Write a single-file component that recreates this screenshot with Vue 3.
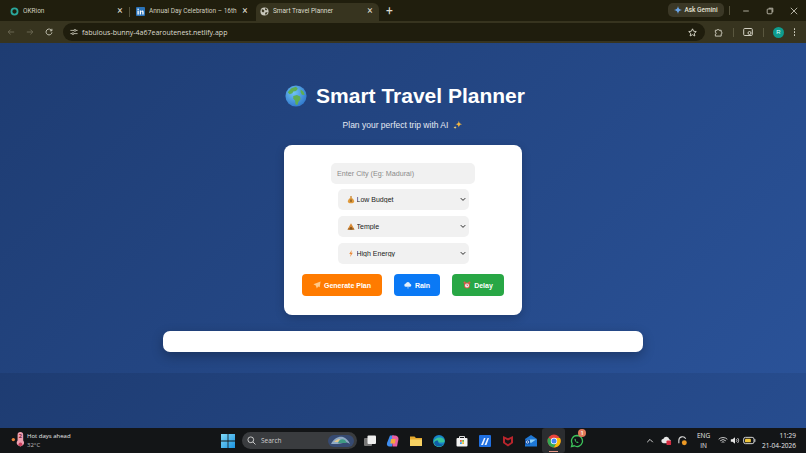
<script setup>
const selects = [
  { label: 'Low Budget', icon: 'bag' },
  { label: 'Temple', icon: 'temple' },
  { label: 'High Energy', icon: 'bolt' }
]
const trayIcons = ['task', 'copilot', 'folder', 'edge', 'store', 'mail', 'mcafee', 'outlook', 'chrome', 'whatsapp']
</script>

<template>
  <div class="screen">
    <!-- browser chrome -->
    <div class="tabbar">
      <div class="tab tab-one">
        <svg class="fav" viewBox="0 0 10 10"><circle cx="5" cy="5" r="3.4" fill="none" stroke="#2aa79b" stroke-width="2" /></svg>
        <span class="tab-title">OKRion</span>
        <span class="tab-x">×</span>
      </div>
      <i class="tab-sep"></i>
      <div class="tab tab-two">
        <svg class="fav" viewBox="0 0 10 10"><rect width="10" height="10" rx="1" fill="#2a73b8" /><rect x="1.6" y="4" width="1.5" height="4.4" fill="#fff" /><circle cx="2.35" cy="2.5" r=".9" fill="#fff" /><path d="M4.2 4h1.4v.7c.4-.6 1-.8 1.500-.8 1 0 1.400.7 1.400 1.800v2.700H7V6c0-.6-.2-.9-.7-.9s-.7.4-.7.9v2.400H4.200z" fill="#fff" /></svg>
        <span class="tab-title">Annual Day Celebration – 16th</span>
        <span class="tab-x">×</span>
      </div>
      <div class="tab tab-active">
        <svg class="fav" viewBox="0 0 10 10"><circle cx="5" cy="5" r="4.500" fill="#c9c8bd" /><path d="M2 2.500l2 .5 1 1.500-1.500 1.500L2 5zM6 1l2 1.500-1 1.500-1.500-1zM6 6l2.500-.5L7 8.500 5.500 8z" fill="#3a3722" /></svg>
        <span class="tab-title">Smart Travel Planner</span>
        <span class="tab-x">×</span>
      </div>
      <span class="new-tab">+</span>
      <div class="gemini">
        <svg viewBox="0 0 10 10" width="8" height="8"><path d="M5 0c.4 3 1.600 4.400 5 5-3.400.6-4.600 2-5 5-.4-3-1.600-4.400-5-5 3.400-.6 4.600-2 5-5z" fill="#6aa5e8" /></svg>
        <span>Ask Gemini</span>
      </div>
      <i class="gem-sep"></i>
      <div class="win-controls">
        <svg viewBox="0 0 10 10" width="8" height="8"><path d="M1.500 5h7" stroke="#cfcdbf" fill="none" /></svg>
        <svg viewBox="0 0 10 10" width="8" height="8"><rect x="1.500" y="2.500" width="6" height="6" rx="1" stroke="#cfcdbf" fill="none" /><path d="M3.500 1.500h5v5" stroke="#cfcdbf" fill="none" /></svg>
        <svg viewBox="0 0 10 10" width="8" height="8"><path d="M1 1l8 8M9 1l-8 8" stroke="#d8d6c8" fill="none" /></svg>
      </div>
    </div>

    <div class="toolbar">
      <div class="nav">
        <svg viewBox="0 0 10 10" width="8" height="8"><path d="M9 5H1.500M4.500 2L1.500 5l3 3" stroke="#6f6c58" fill="none" stroke-width="1.100" /></svg>
        <svg viewBox="0 0 10 10" width="8" height="8"><path d="M1 5h7.500M5.500 2l3 3-3 3" stroke="#6f6c58" fill="none" stroke-width="1.100" /></svg>
        <svg viewBox="0 0 10 10" width="8" height="8"><path d="M8.300 3.200A3.700 3.700 0 1 0 8.700 5.500M8.600 1v2.500H6.100" stroke="#d2d0c2" fill="none" stroke-width="1.100" /></svg>
      </div>
      <div class="omnibox">
        <svg viewBox="0 0 10 10" width="8" height="8"><path d="M.5 3h4.500M7.500 3h2M.5 7h2M5 7h4.500" stroke="#d2d0c2" /><circle cx="6.200" cy="3" r="1.200" fill="none" stroke="#d2d0c2" /><circle cx="3.700" cy="7" r="1.200" fill="none" stroke="#d2d0c2" /></svg>
        <span class="url">fabulous-bunny-4a67earoutenest.netlify.app</span>
        <svg class="star" viewBox="0 0 10 10" width="9" height="9"><path d="M5 .9l1.250 2.700 2.950.35-2.200 2 .6 2.900L5 7.400 2.400 8.850l.6-2.900-2.200-2 2.950-.35z" stroke="#dedcce" fill="none" /></svg>
      </div>
      <div class="tool-icons">
        <svg viewBox="0 0 10 10" width="9" height="9"><path d="M1.500 2.500h2a1 1 0 0 1 2 0h2.500v2a1 1 0 0 1 0 2v2.500H1.500V6.800a1 1 0 0 0 0-2z" stroke="#d2d0c2" fill="none" /></svg>
        <i class="tool-sep"></i>
        <svg viewBox="0 0 10 10" width="10" height="10"><rect x=".7" y="1.500" width="8.600" height="7" rx="1" stroke="#d2d0c2" fill="none" /><circle cx="6.500" cy="6" r="1.500" fill="#37341f" stroke="#d2d0c2" /></svg>
        <i class="tool-sep"></i>
        <span class="avatar">R</span>
        <span class="kebab"><i></i><i></i><i></i></span>
      </div>
    </div>

    <!-- the page itself -->
    <main class="page">
      <h1 class="title">
        <svg class="globe" viewBox="0 0 24 24">
          <defs>
            <radialGradient id="sea" cx="40%" cy="35%" r="75%"><stop offset="0" stop-color="#6fc3f2" /><stop offset="1" stop-color="#2a71c9" /></radialGradient>
          </defs>
          <circle cx="12" cy="12" r="11.500" fill="url(#sea)" />
          <path d="M7 3.500l5-1.500 2 2-2 2.500-3 .5-1 2-3 1L3 8zM9 12l4-1 3.500 1.500.5 3-2.500 3-1 3.500-2-1-.5-4-2-2zM17 5l3 2 1.500 4-3-.5-1.500-2.500z" fill="#5fae52" />
        </svg>
        <span>Smart Travel Planner</span>
      </h1>
      <p class="subtitle">
        Plan your perfect trip with AI
        <svg viewBox="0 0 12 12" width="10" height="10"><path d="M7 1c.4 2.800 1.200 3.600 4 4-2.800.4-3.600 1.200-4 4-.4-2.800-1.200-3.600-4-4 2.800-.4 3.600-1.200 4-4z" fill="#f4b63f" /><path d="M2.500 7c.2 1.300.6 1.700 2 2-1.400.3-1.800.7-2 2-.2-1.300-.6-1.700-2-2 1.400-.3 1.800-.7 2-2z" fill="#f8d37a" /></svg>
      </p>

      <section class="card">
        <input class="city" type="text" placeholder="Enter City (Eg: Madurai)" />
        <div v-for="s in selects" :key="s.label" class="select-wrap">
          <svg class="opt-icon" viewBox="0 0 10 10">
            <g v-if="s.icon === 'bag'">
              <path d="M3.800 .8h2.400L5.700 3h-1.400z" fill="#c8862f" />
              <path d="M4 3h2c2 1.400 3 3 3 4.400C9 9 7.500 9.600 5 9.600S1 9 1 7.400C1 6 2 4.400 4 3z" fill="#e09a3c" />
              <rect x="4.400" y="5" width="1.200" height="3" fill="#5c3a12" />
            </g>
            <g v-else-if="s.icon === 'temple'">
              <path d="M5 .8L9.600 9.200H.4z" fill="#d98a34" />
              <rect x="4.200" y="5.800" width="1.600" height="3.400" fill="#5c3a12" />
              <rect x="2" y="7" width="1.200" height="2.200" fill="#7c4f1c" />
              <rect x="6.800" y="7" width="1.200" height="2.200" fill="#7c4f1c" />
            </g>
            <path v-else d="M6 .5L2.800 5.600h1.900L3.900 9.500 7.200 4.200H5.300z" fill="#ea8a3a" />
          </svg>
          <select class="opt">
            <option>{{ s.label }}</option>
          </select>
          <svg class="chev" viewBox="0 0 8 6" width="6" height="5"><path d="M1 1.200l3 3 3-3" stroke="#222" stroke-width="1.300" fill="none" /></svg>
        </div>
        <div class="actions">
          <button class="btn btn-plan">
            <svg viewBox="0 0 10 10" width="8" height="8"><path d="M9.500.5L.5 4.200l3 1.300 1.300 3.800 1.600-2.500 1.900 1z" fill="#ffc98a" /></svg>
            Generate Plan
          </button>
          <button class="btn btn-rain">
            <svg viewBox="0 0 10 10" width="8" height="8"><path d="M2.500 7.200a2 2 0 0 1-.2-4 2.700 2.700 0 0 1 5.200.1 2 2 0 0 1 .1 3.900z" fill="#e4f0fb" /><path d="M5 7v2.500" stroke="#bcd9f5" /></svg>
            Rain
          </button>
          <button class="btn btn-delay">
            <svg viewBox="0 0 10 10" width="8" height="8"><circle cx="2" cy="2" r="1.400" fill="#e2574c" /><circle cx="8" cy="2" r="1.400" fill="#e2574c" /><circle cx="5" cy="5.600" r="3.600" fill="#e2574c" /><circle cx="5" cy="5.600" r="2.500" fill="#f4ecec" /><path d="M5 4v1.700h1.300" stroke="#444" stroke-width=".6" fill="none" /></svg>
            Delay
          </button>
        </div>
      </section>

      <div class="result"></div>
    </main>

    <!-- windows taskbar -->
    <footer class="taskbar">
      <div class="weather">
        <svg viewBox="0 0 16 18" width="15" height="17">
          <circle cx="2.500" cy="8" r="1.800" fill="#e8843c" />
          <path d="M7 3a3 3 0 0 1 6 0v6a3.800 3.800 0 1 1-6 0z" fill="#ef9fb0" />
          <circle cx="10" cy="13" r="2" fill="#c9405e" />
          <text x="10" y="6.500" class="therm" text-anchor="middle">2</text>
        </svg>
        <div class="weather-text">
          <span>Hot days ahead</span>
          <span class="temp">32°C</span>
        </div>
      </div>

      <div class="center">
        <svg class="start" viewBox="0 0 14 14" width="14" height="14">
          <defs><linearGradient id="win" x1="0" y1="0" x2="1" y2="1"><stop offset="0" stop-color="#7fd8f7" /><stop offset="1" stop-color="#1b93e0" /></linearGradient></defs>
          <path d="M0 0h6.600v6.600H0zM7.400 0H14v6.600H7.400zM0 7.400h6.600V14H0zM7.400 7.400H14V14H7.400z" fill="url(#win)" />
        </svg>
        <div class="search">
          <svg viewBox="0 0 10 10" width="9" height="9"><circle cx="4.200" cy="4.200" r="3.200" stroke="#d8d8d8" fill="none" /><path d="M6.600 6.600l2.800 2.800" stroke="#d8d8d8" /></svg>
          <span>Search</span>
          <svg class="bing" viewBox="0 0 26 12" width="26" height="12">
            <rect width="26" height="12" rx="6" fill="#364a72" />
            <path d="M3 9c3-6 8-8 12-7 3 1 5 3 7 7-3-2-5-2-7-1-3 1-8 1-12 1z" fill="#8fa9c4" />
            <path d="M10 8c1-3 4-5 7-3l2 3z" fill="#3f9a83" />
            <path d="M6 7c2-2 4-3 6-3l-2 3z" fill="#e3c98a" />
          </svg>
        </div>
        <div class="apps">
          <div v-for="name in trayIcons" :key="name" class="app" :class="{ on: name === 'chrome' }">
            <svg viewBox="0 0 14 14" width="14" height="14">
              <g v-if="name === 'task'">
                <rect x="1" y="4" width="8" height="8" rx="1" fill="#777" />
                <rect x="4.500" y="1.500" width="8.500" height="8.500" rx="1" fill="#eee" />
              </g>
              <g v-else-if="name === 'copilot'">
                <path d="M4 1.500h4L6 12.500H3.500C1.500 12.500 .5 11 1 9z" fill="#3f8ef0" />
                <path d="M6 1.500h3c2 0 3.500 1.500 3.500 3.500L11 12.500H6.500z" fill="#ea5fa0" />
                <path d="M5 5h4.500L9 9.500H4.300z" fill="#f4a83a" />
              </g>
              <g v-else-if="name === 'folder'">
                <path d="M1 2.500h4.500l1.500 1.500h6V12H1z" fill="#e5a92e" />
                <rect x="1" y="5.500" width="12" height="6.500" fill="#f8d263" />
              </g>
              <g v-else-if="name === 'edge'">
                <circle cx="7" cy="7" r="6" fill="#1785c9" />
                <path d="M1.500 8C2.500 3.500 9 2 12 5.500c1 1.300.8 3-1 3H6.500c0 2 3 3 5.500 2-2 2.500-5.500 3-8 1.500C2 11 1.500 9.500 1.500 8z" fill="#39c49a" />
                <path d="M6 6.500C6 9 8 11 12 10.500 9.500 13 4.500 13.500 2.500 10c-.8-1.500 0-3.500 3.500-3.500z" fill="#0f5ea8" />
              </g>
              <g v-else-if="name === 'store'">
                <path d="M4.500 4V2.500h5V4" fill="none" stroke="#ddd" />
                <rect x="1.500" y="4" width="11" height="8.500" rx="1" fill="#f3f3f3" />
                <rect x="5" y="6" width="1.800" height="1.800" fill="#e8553f" />
                <rect x="7.200" y="6" width="1.800" height="1.800" fill="#6cbb3c" />
                <rect x="5" y="8.200" width="1.800" height="1.800" fill="#2e9de4" />
                <rect x="7.200" y="8.200" width="1.800" height="1.800" fill="#f6b82c" />
              </g>
              <g v-else-if="name === 'mail'">
                <rect x="1" y="1" width="12" height="12" rx="1" fill="#1f6fe0" />
                <path d="M3 11l3-7h1.500L5 11zM6.500 11l3-7H11L8.500 11z" fill="#e9f1ff" />
              </g>
              <path v-else-if="name === 'mcafee'" d="M2 2l5 2.200L12 2v7l-5 3.500L2 9zM4 5v3.200l3 2 3-2V5L7 6.500z" fill="#b8252c" />
              <g v-else-if="name === 'outlook'">
                <path d="M7 1l6 4v7.500H1V5z" fill="#1e78d6" />
                <path d="M2 5.500h10L7 9z" fill="#8fd0f7" />
                <rect x="1" y="5.500" width="5" height="5" rx=".5" fill="#0f4fa8" />
                <circle cx="3.500" cy="8" r="1.200" fill="none" stroke="#fff" stroke-width=".7" />
              </g>
              <g v-else-if="name === 'chrome'">
                <circle cx="7" cy="7" r="6.500" fill="#e8453c" />
                <path d="M7 7L1.400 3.800A6.500 6.500 0 0 0 7 13.500l3-5z" fill="#34a853" />
                <path d="M7 4h6a6.500 6.500 0 0 1-6 9.500L10 8z" fill="#fbbc05" />
                <circle cx="7" cy="7" r="3.200" fill="#fff" />
                <circle cx="7" cy="7" r="2.500" fill="#4285f4" />
              </g>
              <g v-else>
                <path d="M7 1.500a5.500 5.500 0 0 0-4.700 8.300L1.500 12.500l2.800-.7A5.500 5.500 0 1 0 7 1.500z" fill="#111316" stroke="#3dc35b" stroke-width="1.300" />
                <path d="M5 4.500c-.8.800-.5 2 .6 3.200s2.300 1.600 3.100.8l-1.100-1-.7.400c-.6-.3-1-.8-1.200-1.300l.4-.7z" fill="#3dc35b" />
              </g>
            </svg>
            <b v-if="name === 'whatsapp'" class="badge">1</b>
          </div>
        </div>
      </div>

      <div class="tray">
        <svg viewBox="0 0 10 10" width="8" height="8"><path d="M1.500 6.500L5 3l3.500 3.500" stroke="#e8e8e8" stroke-width="1.100" fill="none" /></svg>
        <svg class="t-cloud" viewBox="0 0 12 12" width="11" height="11"><path d="M3 9a2.500 2.500 0 0 1-.3-5A3.300 3.300 0 0 1 9 4.500 2.300 2.300 0 0 1 9 9z" fill="#e6e6e6" /><rect x="6" y="6" width="5" height="5" rx="1" fill="#d5293f" /></svg>
        <svg class="t-head" viewBox="0 0 12 12" width="11" height="11"><path d="M2 9V6a4 4 0 0 1 7.500-2" stroke="#d8d8d8" fill="none" stroke-width="1.200" /><circle cx="8" cy="8.500" r="2.700" fill="#ee9a25" /></svg>
        <div class="lang"><span>ENG</span><span>IN</span></div>
        <svg class="t-wifi" viewBox="0 0 12 10" width="10" height="9"><path d="M.8 3.500a7.500 7.500 0 0 1 10.400 0M2.600 5.400a5 5 0 0 1 6.800 0M4.400 7.200a2.400 2.400 0 0 1 3.200 0" stroke="#e6e6e6" fill="none" /></svg>
        <svg class="t-vol" viewBox="0 0 12 10" width="10" height="9"><path d="M1 3.500h2L6 1v8L3 6.500H1z" fill="#e6e6e6" /><path d="M7.500 3.500a2 2 0 0 1 0 3M9 2a4 4 0 0 1 0 6" stroke="#e6e6e6" fill="none" /></svg>
        <svg class="t-bat" viewBox="0 0 14 10" width="13" height="9"><rect x=".5" y="1.500" width="11.500" height="7" rx="2" stroke="#e6e6e6" fill="none" /><rect x="2" y="3" width="6.500" height="4" rx="1" fill="#f0c63c" /><rect x="12.500" y="3.500" width="1" height="3" fill="#e6e6e6" /></svg>
        <div class="clock"><span>11:29</span><span>21-04-2026</span></div>
      </div>
    </footer>
  </div>
</template>

<style>
html, body { margin: 0; background: #1e3c72; overflow: hidden; }
</style>

<style scoped>
.screen {
  width: 806px;
  height: 453px;
  display: flex;
  flex-direction: column;
  overflow: hidden;
  font-family: "Liberation Sans", Arial, sans-serif;
}

/* browser */
.tabbar {
  height: 21px;
  flex: none;
  display: flex;
  align-items: flex-end;
  background: #201e0d;
  color: #cfcdbf;
  font-family: Roboto, sans-serif;
  font-size: 6.500px;
}
.tab {
  height: 18px;
  display: flex;
  align-items: center;
  box-sizing: border-box;
  padding: 0 5px 2px 10px;
  gap: 4px;
}
.tab-one { width: 129px; }
.tab-two { width: 124px; padding-left: 6px; }
.tab-active {
  width: 123px;
  margin-left: 2px;
  padding-left: 4px;
  background: #37341f;
  border-radius: 6px 6px 0 0;
  color: #dddbcd;
}
.tab-sep { width: 1px; height: 10px; background: #55523c; margin-bottom: 4px; }
.fav { width: 9px; height: 9px; flex: none; }
.tab-title { flex: 1; white-space: nowrap; overflow: hidden; }
.tab-x { font-size: 10px; line-height: 10px; color: #dedccf; width: 8px; text-align: center; }
.new-tab { font-size: 12px; line-height: 14px; margin: 0 0 3px 7px; color: #dedccf; }
.gemini {
  margin: 0 0 4px auto;
  width: 56px;
  height: 14px;
  border-radius: 5px;
  background: #3b3826;
  display: flex;
  align-items: center;
  justify-content: center;
  gap: 2px;
  font-size: 6.500px;
  font-weight: 500;
  color: #e3e1d3;
}
.gem-sep { width: 1px; height: 9px; background: #55523c; margin: 0 0 6px 5px; }
.win-controls {
  width: 76px;
  height: 21px;
  display: flex;
  align-items: center;
  justify-content: space-between;
  box-sizing: border-box;
  padding: 0 8px 0 12px;
}

.toolbar {
  height: 22px;
  flex: none;
  display: flex;
  align-items: center;
  background: #37341f;
  padding: 0 11px 0 7px;
  box-sizing: border-box;
}
.nav { display: flex; gap: 11px; width: 56px; align-items: center; flex: none; }
.omnibox {
  width: 642px;
  flex: none;
  height: 18px;
  box-sizing: border-box;
  padding: 0 8px 0 7px;
  border-radius: 9px;
  background: #1f1d0d;
  display: flex;
  align-items: center;
  gap: 4px;
  color: #dedccf;
  font-family: "Open Sans", sans-serif;
  font-size: 7px;
}
.url { flex: 1; }
.star { flex: none; }
.tool-icons {
  flex: 1;
  display: flex;
  align-items: center;
  justify-content: space-between;
  padding: 0 0 0 9px;
}
.tool-sep { width: 1px; height: 9px; background: #5a573f; }
.avatar {
  width: 11px;
  height: 11px;
  border-radius: 50%;
  background: #0e9c8e;
  color: #dff;
  font-size: 6px;
  text-align: center;
  line-height: 11px;
}
.kebab { display: flex; flex-direction: column; gap: 1.500px; }
.kebab i { width: 1.500px; height: 1.500px; border-radius: 50%; background: #d6d4c6; }

/* page */
.page {
  height: 385px;
  flex: none;
  display: flex;
  flex-direction: column;
  align-items: center;
  box-sizing: border-box;
  padding-top: 38px;
  background: linear-gradient(135deg, #1e3c72, #2a5298) 0 0 / 100% 330px repeat-y;
  color: #fff;
}
.title {
  margin: 0 0 0 4px;
  display: flex;
  align-items: center;
  gap: 9px;
  height: 30px;
  font-size: 21px;
  font-weight: 700;
}
.globe { width: 22px; height: 22px; }
.subtitle {
  margin: 7px 0 0;
  height: 14px;
  display: flex;
  align-items: center;
  gap: 5px;
  font-size: 8.500px;
  color: #e4e9f2;
}
.card {
  margin-top: 13px;
  width: 238px;
  height: 170px;
  box-sizing: border-box;
  background: #fff;
  border-radius: 8px;
  padding-top: 18px;
  display: flex;
  flex-direction: column;
  align-items: center;
  box-shadow: 0 3px 10px rgba(0, 0, 0, .2);
}
.city {
  display: block;
  width: 144px;
  height: 21px;
  box-sizing: border-box;
  border: none;
  outline: none;
  border-radius: 5px;
  background: #f1f1f1;
  padding: 0 6px;
  margin: 0 0 5px;
  font-family: inherit;
  font-size: 7.200px;
}
.city::placeholder { color: #8b8b8b; }
.select-wrap {
  position: relative;
  width: 131px;
  height: 21px;
  margin-bottom: 6px;
}
.opt {
  display: block;
  appearance: none;
  width: 100%;
  height: 100%;
  border: none;
  outline: none;
  border-radius: 5px;
  background-color: #f1f1f1;
  padding: 0 0 0 19px;
  font-family: inherit;
  font-size: 7px;
  color: #222;
}
.opt-icon {
  position: absolute;
  left: 9px;
  top: 6px;
  width: 8px;
  height: 9px;
  pointer-events: none;
}
.chev {
  position: absolute;
  right: 3px;
  top: 8px;
  pointer-events: none;
}
.actions {
  display: flex;
  gap: 12px;
  margin-top: 4px;
}
.btn {
  height: 22px;
  border: none;
  border-radius: 4px;
  color: #fff;
  font-family: inherit;
  font-weight: 700;
  font-size: 7px;
  padding: 0;
  display: flex;
  align-items: center;
  justify-content: center;
  gap: 3px;
}
.btn-plan { width: 80px; background: #ff7b00; }
.btn-rain { width: 46px; background: #0a79f5; }
.btn-delay { width: 52px; background: #28a745; }
.result {
  margin-top: 16px;
  width: 480px;
  height: 21px;
  background: #fff;
  border-radius: 7px;
  box-shadow: 0 4px 12px rgba(0, 0, 0, .28);
}

/* taskbar */
.taskbar {
  height: 25px;
  flex: none;
  display: flex;
  align-items: center;
  background: #131517;
  color: #e8e8e8;
  font-family: "Open Sans", sans-serif;
  font-size: 6px;
  box-sizing: border-box;
}
.weather {
  width: 221px;
  flex: none;
  display: flex;
  align-items: center;
  gap: 1px;
  padding-left: 11px;
  box-sizing: border-box;
}
.therm { font-size: 6px; fill: #7a1f35; font-weight: 700; }
.weather-text { display: flex; flex-direction: column; line-height: 9px; }
.temp { color: #bdbdbd; }
.center { display: flex; align-items: center; width: 414px; flex: none; }
.start { flex: none; }
.search {
  margin-left: 7px;
  width: 115px;
  height: 17px;
  box-sizing: border-box;
  padding: 0 3px 0 5px;
  border-radius: 9px;
  background: #3a3c3f;
  display: flex;
  align-items: center;
  gap: 5px;
  font-size: 6.500px;
  color: #cfcfcf;
}
.search span { flex: 1; }
.apps { display: flex; margin-left: 1px; }
.app {
  position: relative;
  width: 23px;
  height: 25px;
  display: flex;
  align-items: center;
  justify-content: center;
}
.app.on { background: #2b2d30; border-radius: 3px; }
.app.on::after {
  content: "";
  position: absolute;
  left: 7px;
  right: 7px;
  bottom: 1px;
  height: 1.500px;
  background: #e89a8a;
}
.badge {
  position: absolute;
  top: 1px;
  right: 2px;
  width: 8px;
  height: 8px;
  border-radius: 50%;
  background: #e2785a;
  color: #fff;
  font-size: 5.500px;
  line-height: 8px;
  text-align: center;
  font-weight: 600;
}
.tray {
  flex: 1;
  display: flex;
  align-items: center;
  padding: 0 10px 0 11px;
  box-sizing: border-box;
}
.t-cloud { margin-left: 7px; }
.t-head { margin-left: 5px; }
.t-wifi { margin-left: 8px; }
.t-vol { margin-left: 2px; }
.t-bat { margin-left: 3px; }
.lang, .clock {
  display: flex;
  flex-direction: column;
  align-items: center;
  line-height: 10px;
  font-size: 6.500px;
  white-space: nowrap;
}
.lang { margin-left: 9px; }
.clock { align-items: flex-end; margin-left: auto; }
</style>
